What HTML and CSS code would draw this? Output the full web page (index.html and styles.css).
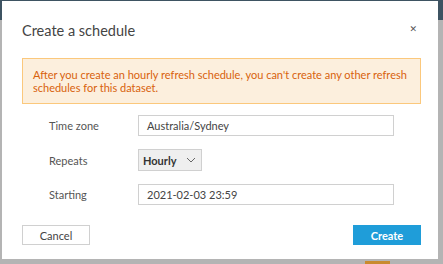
FILE: index.html
```html
<!DOCTYPE html>
<html lang="en">
<head>
<meta charset="UTF-8">
<title>Create a schedule</title>
<link rel="stylesheet" href="styles.css">
</head>
<body>

<div class="backdrop">
    <div class="topbar"></div>
    <div class="behind"><span class="behind-tag"></span></div>
</div>

<div class="dialog">
    <div class="dialog-header">
        <h2 class="dialog-title">Create a schedule</h2>
        <span class="close">&#x2715;</span>
    </div>

    <div class="alert">
        After you create an hourly refresh schedule, you can't create any other refresh schedules for this dataset.
    </div>

    <div class="form">
        <label class="form-label">Time zone</label>
        <div class="field">Australia/Sydney</div>

        <label class="form-label">Repeats</label>
        <div class="select">
            <span>Hourly</span>
            <svg width="10" height="6" viewBox="0 0 10 6"><path d="M1 1 L5 5 L9 1" fill="none" stroke="#666" stroke-width="1"/></svg>
        </div>

        <label class="form-label">Starting</label>
        <div class="field">2021-02-03 23:59</div>
    </div>

    <div class="dialog-footer">
        <button class="btn">Cancel</button>
        <button class="btn btn-primary">Create</button>
    </div>
</div>

</body>
</html>
```

FILE: styles.css
```css
body {
    margin: 0;
    width: 443px;
    height: 264px;
    overflow: hidden;
    font-family: Lato, 'Open Sans', sans-serif;
    background-color: #b4b4b4;
}
.backdrop {
    height: 264px;
    display: flex;
    flex-direction: column;
}
.topbar {
    height: 20px;
    background-color: #3e5362;
}
.behind {
    flex: 1;
    display: flex;
    align-items: flex-end;
    justify-content: flex-end;
    padding-right: 53px;
}
.behind-tag {
    width: 25px;
    height: 3px;
    background-color: #c98a2e;
}
.dialog {
    position: absolute;
    top: 1px;
    left: 2px;
    width: 436px;
    height: 258px;
    box-sizing: border-box;
    background-color: #ffffff;
    padding: 0 17px 0 20px;
}
.dialog-header {
    display: flex;
    justify-content: space-between;
    align-items: center;
    padding-top: 20px;
    height: 20px;
    margin-bottom: 17px;
}
.dialog-title {
    margin: 0;
    font-size: 14.5px;
    font-weight: 400;
    color: #444;
    line-height: 20px;
}
.close {
    font-family: 'DejaVu Sans', sans-serif;
    font-size: 9px;
    color: #555;
    margin-right: 4px;
    margin-top: -4px;
}
.alert {
    background-color: #fcefdd;
    border: 1px solid #fbc87c;
    color: #d8620c;
    font-size: 11px;
    line-height: 13px;
    padding: 9px 10px 9px 10px;
}
.form {
    display: grid;
    grid-template-columns: 89px 256px;
    row-gap: 13px;
    align-items: center;
    margin-top: 11px;
    padding-left: 27px;
}
.form-label {
    font-size: 11px;
    color: #555;
}
.field {
    height: 21px;
    box-sizing: border-box;
    border: 1px solid #d0d0d0;
    font-size: 11px;
    color: #444;
    padding-left: 8px;
    display: flex;
    align-items: center;
}
.select {
    width: 64px;
    height: 22px;
    box-sizing: border-box;
    border: 1px solid #d0d0d0;
    background-color: #efefef;
    font-size: 11px;
    font-weight: 700;
    color: #333;
    padding: 0 5px 0 4px;
    display: flex;
    align-items: center;
    justify-content: space-between;
}
.dialog-footer {
    display: flex;
    justify-content: space-between;
    margin-top: 20px;
}
.btn {
    width: 68px;
    height: 20px;
    box-sizing: border-box;
    border: 1px solid #d0d0d0;
    background-color: #ffffff;
    color: #444;
    font-family: inherit;
    font-size: 11px;
    padding: 0;
}
.btn-primary {
    background-color: #1f9dd9;
    border-color: #1f9dd9;
    color: #ffffff;
    font-weight: 700;
}
```
